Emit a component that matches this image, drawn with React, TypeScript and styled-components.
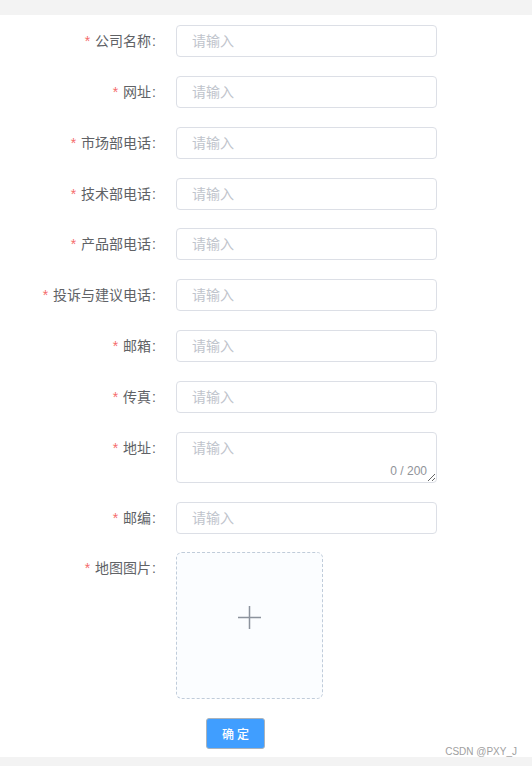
import React from 'react';
import styled, { createGlobalStyle } from 'styled-components';

const GlobalStyle = createGlobalStyle`
  html, body {
    margin: 0;
    padding: 0;
    background: #f3f3f3;
  }
  * {
    box-sizing: border-box;
  }
`;

const Page = styled.div`
  width: 532px;
  height: 766px;
  padding: 15px 0 9px;
  background: #f3f3f3;
  font-family: 'Liberation Sans', 'Noto Sans CJK SC', sans-serif;
  position: relative;
`;

const Panel = styled.div`
  background: #ffffff;
  height: 742px;
  padding-top: 10px;
`;

const Form = styled.form`
  display: flex;
  flex-direction: column;
  gap: 18.85px;
`;

const Row = styled.div`
  display: flex;
  align-items: flex-start;
`;

const Label = styled.label`
  width: 176px;
  padding-right: 20px;
  text-align: right;
  font-size: 14px;
  line-height: 32px;
  color: #606266;
  flex-shrink: 0;
`;

const Star = styled.span`
  color: #f56c6c;
  margin-right: 5px;
`;

const Colon = styled.span`
  margin-left: 1px;
`;

const Input = styled.input`
  width: 261px;
  height: 32px;
  padding: 0 15px;
  border: 1px solid #dcdfe6;
  border-radius: 4px;
  font-family: inherit;
  font-size: 14px;
  color: #606266;
  outline: none;
  background: #fff;

  &::placeholder {
    color: #c0c4cc;
  }
`;

const AreaWrap = styled.div`
  position: relative;
  width: 261px;
  height: 51px;
`;

const TextArea = styled.textarea`
  display: block;
  width: 261px;
  height: 51px;
  padding: 5px 15px;
  border: 1px solid #dcdfe6;
  border-radius: 4px;
  font-family: inherit;
  font-size: 14px;
  line-height: 1.5;
  color: #606266;
  outline: none;
  resize: vertical;

  &::placeholder {
    color: #c0c4cc;
  }
`;

const Counter = styled.span`
  position: absolute;
  right: 10px;
  bottom: 4px;
  font-size: 12px;
  line-height: 15px;
  color: #909399;
  background: #fff;
`;

const Upload = styled.div`
  width: 147px;
  height: 147px;
  border: 1px dashed #c0ccda;
  border-radius: 6px;
  background: #fbfdff;
  display: flex;
  align-items: center;
  justify-content: center;
  cursor: pointer;

  svg {
    margin-bottom: 17px;
  }
`;

const ButtonRow = styled.div`
  padding-left: 206px;
`;

const Submit = styled.button`
  height: 31px;
  width: 59px;
  padding: 0;
  border: 1px solid #aab3bc;
  border-radius: 3px;
  background: #409eff;
  color: #fff;
  font-family: inherit;
  font-size: 12px;
  font-weight: 500;
  letter-spacing: 3px;
  text-indent: 3px;
  cursor: pointer;
`;

const Watermark = styled.span`
  position: absolute;
  right: 15px;
  bottom: 9px;
  font-size: 10px;
  color: #a0a0a0;
`;

const fields = [
  '公司名称',
  '网址',
  '市场部电话',
  '技术部电话',
  '产品部电话',
  '投诉与建议电话',
  '邮箱',
  '传真',
];

const App: React.FC = () => {
  return (
    <Page>
      <GlobalStyle />
      <Panel>
        <Form onSubmit={e => e.preventDefault()}>
          {fields.map(name => (
            <Row key={name}>
              <Label><Star>*</Star>{name}<Colon>:</Colon></Label>
              <Input placeholder="请输入" />
            </Row>
          ))}

          <Row>
            <Label><Star>*</Star>地址<Colon>:</Colon></Label>
            <AreaWrap>
              <TextArea placeholder="请输入" maxLength={200} />
              <Counter>0 / 200</Counter>
            </AreaWrap>
          </Row>

          <Row>
            <Label><Star>*</Star>邮编<Colon>:</Colon></Label>
            <Input placeholder="请输入" />
          </Row>

          <Row>
            <Label><Star>*</Star>地图图片<Colon>:</Colon></Label>
            <Upload>
              <svg width="23" height="23" viewBox="0 0 23 23">
                <path d="M11.5 0v23M0 11.5h23" stroke="#8c939d" strokeWidth="1.5" fill="none" />
              </svg>
            </Upload>
          </Row>

          <ButtonRow>
            <Submit type="submit">确定</Submit>
          </ButtonRow>
        </Form>
      </Panel>
      <Watermark>CSDN @PXY_J</Watermark>
    </Page>
  );
};

export default App;
